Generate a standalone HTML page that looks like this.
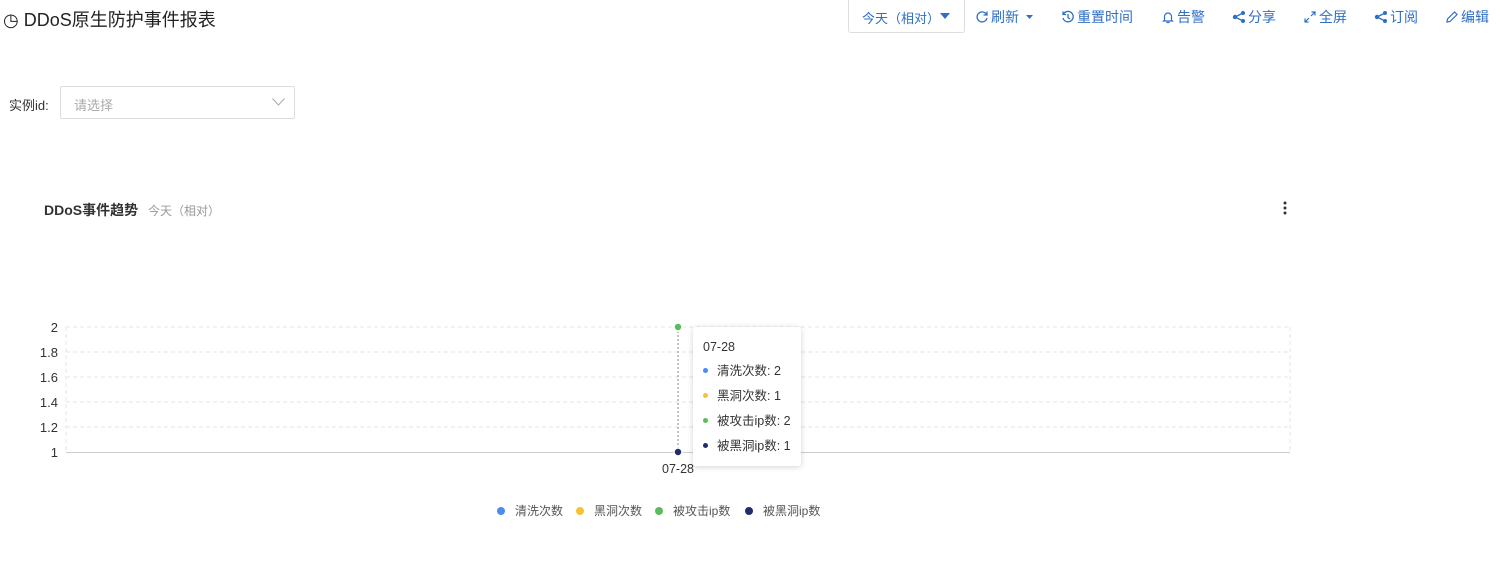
<!DOCTYPE html>
<html><head><meta charset="utf-8"><style>
*{margin:0;padding:0;box-sizing:border-box}
body{width:1500px;height:566px;background:#fff;font-family:"Liberation Sans","Noto Sans CJK SC",sans-serif;position:relative;overflow:hidden;color:#333}
.a{position:absolute;white-space:nowrap}
.nav{color:#2f6fc4;font-size:14px;top:7px;display:flex;align-items:center}
.nav svg{margin-right:2px}
.tt .d{display:inline-block;width:5px;height:5px;border-radius:50%;margin-right:9px;vertical-align:middle;position:relative;top:-1px}
</style></head><body>
<div class="a" style="left:3px;top:6px;font-size:18px;color:#222">◷ DDoS原生防护事件报表</div>
<div class="a" style="left:848px;top:0;width:117px;height:33px;border:1px solid #ddd;border-top:none;border-radius:0 0 3px 3px;font-size:13px;color:#2f6fc4;padding:8px 0 0 13px">今天（相对）<svg style="position:absolute;left:91px;top:13px" width="10" height="6"><path d="M0 0H10L5 6Z" fill="#2f6fc4"/></svg></div>
<div class="a nav" style="left:975px"><svg width="14" height="14" viewBox="0 0 14 14"><path d="M11.5 4.5A5 5 0 1 0 12 8" fill="none" stroke="#2f6fc4" stroke-width="1.3"/><path d="M12 1.5V5H8.5" fill="none" stroke="#2f6fc4" stroke-width="1.3"/></svg>刷新<svg style="margin-left:7px" width="7" height="4"><path d="M0 0H7L3.5 4Z" fill="#2f6fc4"/></svg></div>
<div class="a nav" style="left:1061px"><svg width="14" height="14" viewBox="0 0 14 14"><path d="M2.5 4A5.2 5.2 0 1 1 2 8" fill="none" stroke="#2f6fc4" stroke-width="1.3"/><path d="M2 1.5V4.5H5M7 4V7.5L9 9" fill="none" stroke="#2f6fc4" stroke-width="1.3"/></svg>重置时间</div>
<div class="a nav" style="left:1161px"><svg width="14" height="14" viewBox="0 0 14 14"><path d="M3.5 10V6.5A3.5 3.5 0 0 1 10.5 6.5V10L11.5 11H2.5ZM5.5 12.5H8.5" fill="none" stroke="#2f6fc4" stroke-width="1.2"/></svg>告警</div>
<div class="a nav" style="left:1232px"><svg width="14" height="14" viewBox="0 0 14 14"><circle cx="3" cy="7" r="2.2" fill="#2f6fc4"/><circle cx="11" cy="3" r="2" fill="#2f6fc4"/><circle cx="11" cy="11" r="2" fill="#2f6fc4"/><path d="M3 7L11 3M3 7L11 11" stroke="#2f6fc4" stroke-width="1.3"/></svg>分享</div>
<div class="a nav" style="left:1303px"><svg width="14" height="14" viewBox="0 0 14 14"><path d="M2 12L6 8M2 8.5V12H5.5M12 2L8 6M8.5 2H12V5.5" fill="none" stroke="#2f6fc4" stroke-width="1.2"/></svg>全屏</div>
<div class="a nav" style="left:1374px"><svg width="14" height="14" viewBox="0 0 14 14"><circle cx="3" cy="7" r="2.2" fill="#2f6fc4"/><circle cx="11" cy="3" r="2" fill="#2f6fc4"/><circle cx="11" cy="11" r="2" fill="#2f6fc4"/><path d="M3 7L11 3M3 7L11 11" stroke="#2f6fc4" stroke-width="1.3"/></svg>订阅</div>
<div class="a nav" style="left:1445px"><svg width="14" height="14" viewBox="0 0 14 14"><path d="M2 12L2.5 9L9.5 2L12 4.5L5 11.5Z" fill="none" stroke="#2f6fc4" stroke-width="1.2"/></svg>编辑</div>
<div class="a" style="left:9px;top:95px;font-size:13px">实例id:</div>
<div class="a" style="left:60px;top:86px;width:235px;height:33px;border:1px solid #ddd;border-radius:2px;font-size:13px;color:#aaa;padding:8px 13px">请选择<svg style="position:absolute;right:9px;top:11px" width="13" height="8"><path d="M0.5 0.5L6.5 7L12.5 0.5" fill="none" stroke="#aaa"/></svg></div>
<div class="a" style="left:44px;top:200px;font-size:14px;font-weight:bold;color:#333">DDoS事件趋势 <span style="font-weight:normal;font-size:12px;color:#999;margin-left:6px">今天（相对）</span></div>
<svg class="a" style="left:1282px;top:201px" width="6" height="14"><circle cx="3" cy="2" r="1.5" fill="#333"/><circle cx="3" cy="7" r="1.5" fill="#333"/><circle cx="3" cy="12" r="1.5" fill="#333"/></svg>
<svg class="a" style="left:0;top:0" width="1500" height="566">
<g stroke="#e4e4e4" stroke-dasharray="4,3"><line x1="66" y1="327" x2="1290" y2="327"/><line x1="66" y1="352" x2="1290" y2="352"/><line x1="66" y1="377" x2="1290" y2="377"/><line x1="66" y1="402" x2="1290" y2="402"/><line x1="66" y1="427" x2="1290" y2="427"/><line x1="66" y1="327" x2="66" y2="452"/><line x1="1290" y1="327" x2="1290" y2="452"/></g>
<line x1="66" y1="452.5" x2="1290" y2="452.5" stroke="#ccc"/>
<line x1="678" y1="327" x2="678" y2="452" stroke="#888" stroke-dasharray="2,2"/>
<g font-size="13" fill="#333" text-anchor="end"><text x="58" y="332">2</text><text x="58" y="357">1.8</text><text x="58" y="382">1.6</text><text x="58" y="407">1.4</text><text x="58" y="432">1.2</text><text x="58" y="457">1</text></g>
<text x="678" y="473" font-size="12.5" fill="#333" text-anchor="middle">07-28</text>
<circle cx="678" cy="327" r="4" fill="#5cbb5c" stroke="#fff" stroke-width="1.5"/>
<circle cx="678" cy="452" r="4" fill="#1f2d6b" stroke="#fff" stroke-width="1.5"/>
<g font-size="12" fill="#555"><circle cx="501" cy="511" r="4" fill="#4a8bf0"/><text x="515" y="515">清洗次数</text>
<circle cx="580" cy="511" r="4" fill="#f5c330"/><text x="594" y="515">黑洞次数</text>
<circle cx="659" cy="511" r="4" fill="#5cbb5c"/><text x="673" y="515">被攻击ip数</text>
<circle cx="749" cy="511" r="4" fill="#1f2d6b"/><text x="763" y="515">被黑洞ip数</text></g>
</svg>
<div class="a tt" style="left:693px;top:327px;width:108px;height:139px;background:#fff;box-shadow:0 1px 6px rgba(0,0,0,.18);border-radius:3px;font-size:12.5px;color:#333;padding:12px 0 0 10px;line-height:25px">
<div style="line-height:16px;margin-bottom:4px">07-28</div>
<div><span class="d" style="background:#4a8bf0"></span>清洗次数: 2</div>
<div><span class="d" style="background:#f5c330"></span>黑洞次数: 1</div>
<div><span class="d" style="background:#5cbb5c"></span>被攻击ip数: 2</div>
<div><span class="d" style="background:#1f2d6b"></span>被黑洞ip数: 1</div>
</div>
</body></html>
